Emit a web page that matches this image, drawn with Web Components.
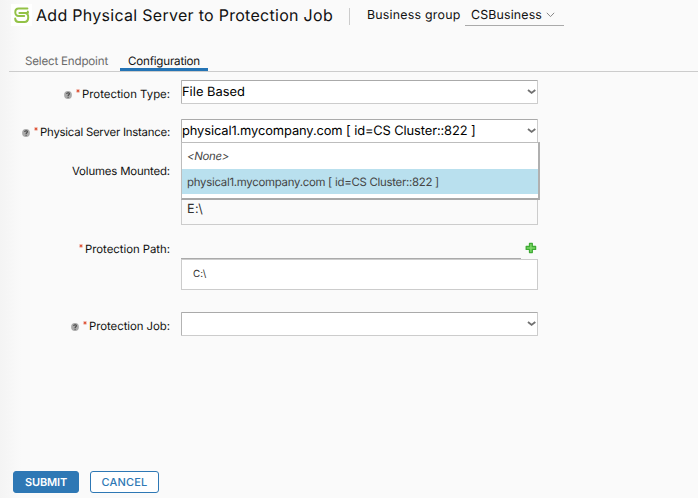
<!DOCTYPE html>
<html lang="en">
<head>
<meta charset="utf-8">
<title>Add Physical Server to Protection Job</title>
<style>
html,body{margin:0;height:100%;overflow:hidden;background:#fafafa}
</style>
</head>
<body>
<protection-page></protection-page>
<script>
// Single-line text whose letter spacing is adjusted to fill the width given in "w".
class FitText extends HTMLElement{
  connectedCallback(){
    if(this.shadowRoot)return;
    this.attachShadow({mode:'open'}).innerHTML=`<style>:host{display:block;white-space:pre;flex:none;text-rendering:geometricPrecision}span{display:inline-block}</style><span><slot></slot></span>`;
    const w=+this.getAttribute('w'),s=this.shadowRoot.querySelector('span');
    if(w){
      const n=this.textContent.length;
      s.style.letterSpacing=((w-s.getBoundingClientRect().width)/n).toFixed(3)+'px';
      this.style.width=w+'px';
    }
  }
}
customElements.define('fit-text',FitText);

const define=(name,html)=>customElements.define(name,class extends HTMLElement{
  constructor(){super();this.attachShadow({mode:'open'}).innerHTML=html;}
});

define('brand-logo',`<style>:host{display:block;width:21px;height:22px;background:#fff;flex:none}svg{display:block}</style>
<svg width="21" height="22" viewBox="0 0 21 22" fill="none" stroke="#93c247" stroke-width="2" stroke-linecap="round" stroke-linejoin="round"><path d="M16.4 4.6H7.6C3.2 4.6 3.2 11.9 7.6 11.9h5.6M16.8 7.6q.6 1.4-.8 1.4H8.4M4.2 14.6q.2 3.4 3.4 3.4h5.8c5 0 5-8.6.6-9"/></svg>`);

define('help-icon',`<style>:host{display:block;width:8px;height:8px;flex:none}svg{display:block}</style>
<svg width="8" height="8" viewBox="0 0 8 8"><circle cx="4" cy="4" r="3.9" fill="#aaa"/><path d="M2.7 3.1C2.7 1.2 5.5 1.3 5.4 3 5.3 3.8 4.1 3.8 4.1 4.9M4.1 5.7v1" fill="none" stroke="#444" stroke-width="1.1"/></svg>`);

define('required-mark',`<style>:host{display:block;width:4px;height:4px;flex:none;align-self:flex-start}svg{display:block}</style>
<svg width="4" height="4" viewBox="0 0 5 5"><path d="M2.5.3v4.2M.6 1.3l3.8 2.2M4.4 1.3L.6 3.5" stroke="#dc4a2c" stroke-width="1.2"/></svg>`);

define('field-label',`<style>:host{display:flex;align-items:center;justify-content:flex-end;height:16px;width:170px;line-height:16px;font-size:11.4px;color:#111}
.m{display:flex;align-items:center;gap:4.5px;height:16px;margin-right:2px}::slotted(required-mark){margin-top:3px}::slotted(help-icon){margin-top:2px}</style>
<div class="m"><slot name="marks"></slot></div><slot></slot>`);

define('select-box',`<style>:host{display:flex;box-sizing:border-box;width:357px;height:24px;background:#fff;border:1px solid #ccc;border-top-color:#aaa;border-left-color:#b3b3b3;border-radius:1px;justify-content:space-between;align-items:center;line-height:22px;font-size:12.9px;color:#000}
div{margin-top:var(--text-drop,1px)}svg{display:block;flex:none}</style><div><slot></slot></div>
<svg width="10" height="6" viewBox="0 0 10 6"><path d="M1 1.1l3.6 2.8L8.3 1.1" fill="none" stroke="#707070" stroke-width="1.9"/></svg>`);

define('option-list',`<style>:host{display:block;box-sizing:border-box;width:359px;height:58px;padding:1px 0 0;background:#fff;border:1px solid #bdbdbd;border-right:2px solid #b0b0b0;border-bottom:2px solid #a8a8a8;font-size:11.4px;line-height:24px;color:#444}</style><slot></slot>`);
define('list-option',`<style>:host{display:block;height:25px;padding-left:5px}:host([selected]){background:#b9e0ee;line-height:26px}</style><slot></slot>`);

define('page-tab',`<style>:host{display:block;box-sizing:border-box;height:19px;line-height:18px;font-size:11.6px;color:#6b6b6b}:host([active]){color:#111;border-bottom:3px solid #2474b5;padding:0 8px}</style><slot></slot>`);

define('action-button',`<style>:host{display:flex;box-sizing:border-box;height:22px;border:1px solid #2e78b5;border-radius:3px;align-items:center;justify-content:center;font-size:11px;font-weight:500;color:#2e78b5;background:#fff}:host([primary]){background:#2e78b5;color:#fff;font-weight:600}</style><slot></slot>`);

define('add-icon',`<style>:host{display:block;width:12px;height:12px}svg{display:block}</style>
<svg width="12" height="12" viewBox="0 0 12 12"><path d="M4.5 1.4h2.8v3.1h3.3v2.9H7.3v3.2H4.5V7.4H1.2V4.5h3.3z" fill="#7bd665" stroke="#3fab35" stroke-width="1.3" stroke-linejoin="round"/></svg>`);

define('protection-page',`<style>
:host{display:flex;flex-direction:column;box-sizing:border-box;width:698px;height:499px;font-family:Inter,sans-serif;color:#111;background:linear-gradient(90deg,#f4f4f4,#fafafa 22px);border-bottom:1px solid #fff}
header{display:flex;height:52px;padding:4px 0 0 11px;box-sizing:border-box}
.title{font-size:16px;line-height:22px;margin-left:4px}
.rule{width:1px;height:17px;background:#ccc;margin:4px 0 0 16px;flex:none}
.group{font-size:12.4px;line-height:20px;margin:1px 0 0 17px}
.picker{display:flex;box-sizing:border-box;width:99px;height:22px;border-bottom:1px solid #aaa;margin-left:4.5px;padding:0 9px 0 6px;justify-content:space-between;font-size:12.4px;line-height:22px}
.picker svg{margin-top:8px}
nav{display:flex;height:20px;box-sizing:border-box;border-bottom:1px solid #ccc;margin-left:9px;padding-left:16px;gap:12px}
nav page-tab{height:19px}
main{display:flex;flex-direction:column;height:391px;padding-top:8px}
.row{display:flex;gap:11px;align-items:flex-start}
.row field-label{margin-top:6px}
.field{position:relative}
option-list{position:absolute;z-index:2;left:0;top:23px}
.volumes{box-sizing:border-box;width:357px;height:67px;border:1px solid #ccc;padding:41px 0 0 5px;font-size:12.6px;line-height:20px;color:#333}
.path{width:357px}
.add{display:flex;justify-content:flex-end;height:16px;box-sizing:border-box;padding:0 1.5px 0 0}
.line{width:340px;height:1px;background:#aaa}
.paths{box-sizing:border-box;width:357px;height:31px;border:1px solid #ccc;background:#fff;padding:5px 0 0 11px;font-size:9.8px;line-height:20px;color:#333}
footer{display:flex;gap:11px;padding-left:13px}
</style>
<header><brand-logo></brand-logo><fit-text class="title" w="297">Add Physical Server to Protection Job</fit-text><div class="rule"></div><fit-text class="group" w="93.5">Business group</fit-text>
<div class="picker"><fit-text w="71">CSBusiness</fit-text><svg width="9" height="6" viewBox="0 0 9 6"><path d="M.8.8l3.7 3.8L8.2.8" fill="none" stroke="#888" stroke-width="1"/></svg></div></header>
<nav><page-tab><fit-text w="83">Select Endpoint</fit-text></page-tab><page-tab active><fit-text w="72">Configuration</fit-text></page-tab></nav>
<main>
<div class="row" style="height:39px"><field-label><help-icon slot="marks"></help-icon><required-mark slot="marks"></required-mark><fit-text w="88">Protection Type:</fit-text></field-label><select-box style="--text-drop:2px"><fit-text w="63">File Based</fit-text></select-box></div>
<div class="row" style="height:39px"><field-label style="margin-top:5px"><help-icon slot="marks"></help-icon><required-mark slot="marks"></required-mark><fit-text w="130">Physical Server Instance:</fit-text></field-label><div class="field"><select-box><fit-text w="293.5">physical1.mycompany.com [ id=CS Cluster::822 ]</fit-text></select-box>
<option-list><list-option><fit-text w="42" style="font-style:italic">&lt;None&gt;</fit-text></list-option><list-option selected><fit-text w="252">physical1.mycompany.com [ id=CS Cluster::822 ]</fit-text></list-option></option-list></div></div>
<div class="row" style="height:84px"><field-label style="margin-top:5px"><fit-text w="98">Volumes Mounted:</fit-text></field-label><div class="volumes"><fit-text w="17">E:&#92;</fit-text></div></div>
<div class="row" style="height:70px"><field-label style="margin-top:-1px"><required-mark slot="marks"></required-mark><fit-text w="85">Protection Path:</fit-text></field-label><div class="path"><div class="add"><add-icon></add-icon></div><div class="line"></div><div class="paths"><fit-text w="14">C:&#92;</fit-text></div></div></div>
<div class="row"><field-label><help-icon slot="marks"></help-icon><required-mark slot="marks"></required-mark><fit-text w="81">Protection Job:</fit-text></field-label><select-box></select-box></div>
</main>
<footer><action-button primary style="width:66px"><fit-text w="42">SUBMIT</fit-text></action-button><action-button style="width:69px"><fit-text w="46">CANCEL</fit-text></action-button></footer>`);
</script>
</body>
</html>
